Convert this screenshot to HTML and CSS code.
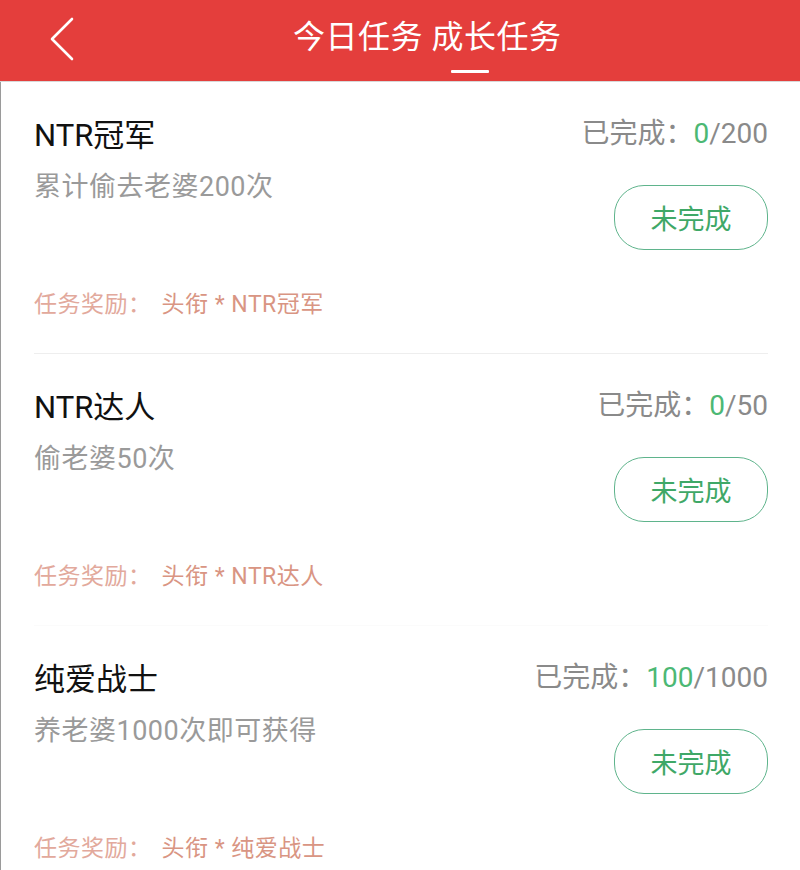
FILE: index.html
```html
<!DOCTYPE html>
<html lang="zh-CN">
<head>
  <meta charset="UTF-8">
  <meta name="viewport" content="width=device-width, initial-scale=1.0">
  <title>成长任务</title>
  <link rel="stylesheet" href="styles.css">
</head>
<body>
  <header class="topbar">
    <a class="back" href="#">
      <svg width="30" height="46" viewBox="0 0 30 46">
        <polyline points="24,4 4,24 24,44" fill="none" stroke="#fff" stroke-width="2.6" stroke-linecap="round" stroke-linejoin="round"/>
      </svg>
    </a>
    <div class="tabs">
      <h1>今日任务 成长任务</h1>
      <span class="indicator"></span>
    </div>
  </header>

  <section class="task-list">
    <div class="task">
      <div class="task-info">
        <h3>NTR冠军</h3>
        <p class="desc">累计偷去老婆200次</p>
        <p class="reward"><span class="reward-label">任务奖励：</span>头衔 * NTR冠军</p>
      </div>
      <div class="task-side">
        <p class="progress">已完成：<span class="done">0</span>/200</p>
        <button class="status-btn">未完成</button>
      </div>
    </div>

    <div class="task task-faint">
      <div class="task-info">
        <h3>NTR达人</h3>
        <p class="desc">偷老婆50次</p>
        <p class="reward"><span class="reward-label">任务奖励：</span>头衔 * NTR达人</p>
      </div>
      <div class="task-side">
        <p class="progress">已完成：<span class="done">0</span>/50</p>
        <button class="status-btn">未完成</button>
      </div>
    </div>

    <div class="task">
      <div class="task-info">
        <h3>纯爱战士</h3>
        <p class="desc">养老婆1000次即可获得</p>
        <p class="reward"><span class="reward-label">任务奖励：</span>头衔 * 纯爱战士</p>
      </div>
      <div class="task-side">
        <p class="progress">已完成：<span class="done">100</span>/1000</p>
        <button class="status-btn">未完成</button>
      </div>
    </div>
  </section>
</body>
</html>
```

FILE: styles.css
```css
body {
  margin: 0;
  font-family: Roboto, "Noto Sans CJK SC", sans-serif;
  background-color: #fff;
}
.topbar {
  height: 82px;
  background-color: #e43e3c;
  display: flex;
  align-items: flex-start;
  box-sizing: border-box;
  border-bottom: 1px solid #d8d8d8;
}
.back {
  display: block;
  margin: 15px 0 0 48px;
  width: 30px;
  height: 46px;
}
.back svg {
  display: block;
}
.tabs {
  margin-left: 215px;
  display: flex;
  flex-direction: column;
}
.tabs h1 {
  margin: 17px 0 0;
  font-size: 32px;
  font-weight: 400;
  letter-spacing: 0.5px;
  line-height: 40px;
  color: #fff;
  white-space: nowrap;
}
.indicator {
  display: block;
  width: 38px;
  height: 3px;
  margin: 13px 0 0 158px;
  background-color: #fff;
  border-radius: 1px;
}
.task-list {
  border-left: 1px solid #9a9a9a;
  min-height: 788px;
}
.task {
  display: flex;
  justify-content: space-between;
  margin: 0 32px 0 33px;
  padding: 34px 0 33px;
  border-bottom: 1px solid #eeeeee;
}
.task-faint {
  border-bottom-color: #fbfbfb;
}
.task:last-child {
  border-bottom: none;
}
.task-info h3 {
  margin: 0;
  font-size: 31px;
  font-weight: 400;
  line-height: 40px;
  color: #111;
}
.desc {
  margin: 14px 0 0;
  font-size: 27px;
  letter-spacing: 0.5px;
  line-height: 34px;
  color: #9a9a9a;
}
.reward {
  margin: 86px 0 0;
  font-size: 23px;
  letter-spacing: 0.5px;
  line-height: 30px;
  color: #d99583;
}
.reward-label {
  color: #e2a99c;
  margin-right: 10px;
}
.task-side {
  display: flex;
  flex-direction: column;
  align-items: flex-end;
}
.progress {
  margin: -2px 0 0;
  font-size: 28px;
  line-height: 40px;
  color: #8a8a8a;
}
.done {
  color: #4cb874;
}
.status-btn {
  margin-top: 31px;
  width: 154px;
  height: 65px;
  border: 1.5px solid #5fb48c;
  border-radius: 30px;
  background-color: #fff;
  color: #3fa867;
  font-family: Roboto, "Noto Sans CJK SC", sans-serif;
  font-size: 27px;
  padding: 0;
}
```
